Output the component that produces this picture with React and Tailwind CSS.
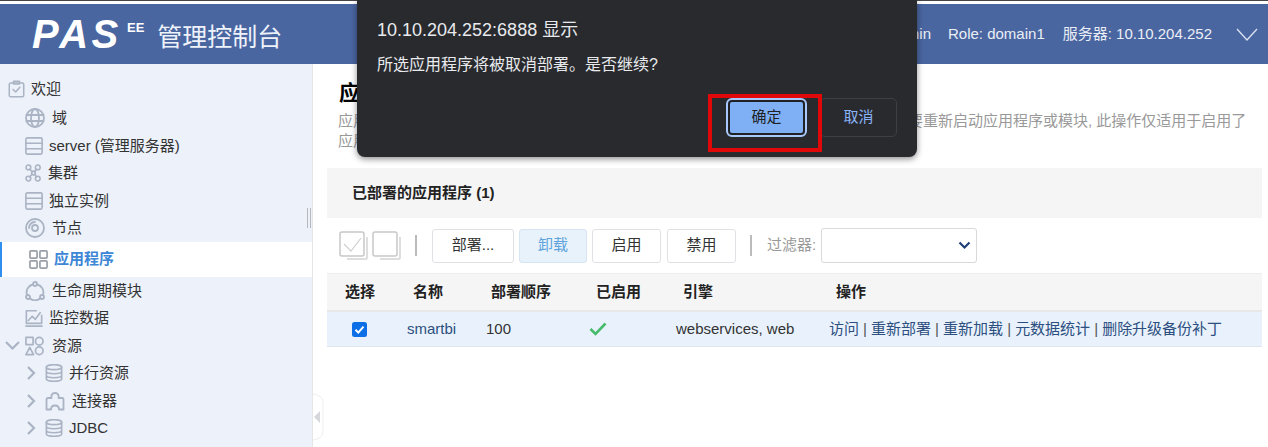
const C = "#aab4c4";
const Ic = ({ w = 20, h = 20, children, color = C, sw = 1.8 }) => (
  <svg width={w} height={h} viewBox="0 0 20 20" fill="none" stroke={color} strokeWidth={sw} strokeLinecap="round" strokeLinejoin="round" className="shrink-0">{children}</svg>
);
const Clip = () => <Ic w={17} h={18}><rect x="1.5" y="3" width="17" height="16" rx="1.5" /><rect x="6.5" y="1" width="7" height="3" /><path d="M6 10.5l3 3 5-5.5" /></Ic>;
const Globe = () => <Ic><circle cx="10" cy="10" r="9" /><ellipse cx="10" cy="10" rx="4" ry="9" /><path d="M1.5 7h17M1.5 13h17" /></Ic>;
const Server = () => <Ic w={18} h={18}><rect x="1" y="1" width="18" height="18" rx="1.5" /><path d="M1 7h18M1 13h18" /></Ic>;
const Cluster = () => <Ic w={17} h={20}><circle cx="4" cy="3.5" r="2.8" /><circle cx="15" cy="3.5" r="2.8" /><circle cx="10" cy="10" r="2.2" /><circle cx="4" cy="16.5" r="2.8" /><circle cx="15" cy="16.5" r="2.8" /><path d="M5.5 5.5l3 3M13.5 5.5l-2.5 3M8.5 11.5l-3 3M11.5 11.5l2 3" /></Ic>;
const Disc = () => <Ic><circle cx="10" cy="10" r="9" /><circle cx="10" cy="10" r="3" /><path d="M10 4a6 6 0 0 0-6 6" /></Ic>;
const Grid = () => <Ic w={19} h={19} color="#9aa0a8"><rect x="1" y="1" width="7.5" height="7.5" rx="1" /><rect x="11.5" y="1" width="7.5" height="7.5" rx="1" /><rect x="1" y="11.5" width="7.5" height="7.5" rx="1" /><rect x="11.5" y="11.5" width="7.5" height="7.5" rx="1" /></Ic>;
const Life = () => <Ic><circle cx="10" cy="3" r="2" /><circle cx="3" cy="16" r="2" /><circle cx="17" cy="16" r="2" /><path d="M7.8 3.5A8 8 0 0 0 2 13.8M12.2 3.5A8 8 0 0 1 18 13.8M5 17.5a8 8 0 0 0 10 0" /></Ic>;
const Chart = () => <Ic w={18} h={18}><path d="M18.5 7v9H1.5V2h11" /><path d="M1 19h18" /><path d="M3.5 13l4.5-5 3.5 3.5L17 4" /></Ic>;
const Res = () => <Ic w={19} h={20}><rect x="1" y="1" width="7.5" height="7.5" /><circle cx="15" cy="5" r="4" /><path d="M5 11.5l4 7.5H1z" /><circle cx="15" cy="15" r="4" /></Ic>;
const Db = () => <Ic w={18} h={18}><ellipse cx="10" cy="3.5" rx="8.5" ry="2.8" /><path d="M1.5 3.5v13c0 1.6 3.8 2.8 8.500 2.800s8.500-1.200 8.500-2.800v-13M1.500 8c0 1.600 3.800 2.800 8.500 2.800s8.500-1.200 8.500-2.800M1.500 12.500c0 1.600 3.800 2.800 8.500 2.800s8.500-1.200 8.500-2.800" /></Ic>;
const Conn = () => <Ic><path d="M1.500 8.500c0-1 .6-1.500 1.500-1.500h3.500C6 5 6.500 2 10 2s4 3 3.500 5H17c1 0 1.500.5 1.500 1.500V18.500h-4.500c0-3-1.500-4-4-4s-4 1-4 4H1.500z" /></Ic>;
const Down = ({ className = "" }) => <svg width="15" height="9" viewBox="0 0 15 9" fill="none" stroke="#aab4c4" strokeWidth="2.200" className={className}><path d="M1 1l6.500 6.500L14 1" /></svg>;
const Right = () => <svg width="9" height="14" viewBox="0 0 9 14" fill="none" stroke="#aab4c4" strokeWidth="2.200" className="shrink-0"><path d="M1 1l6 6-6 6" /></svg>;

const Row = ({ pl, icon, gap, text, lead }) => (
  <div className={`flex items-center h-[27.5px] ${pl} ${gap}`}>
    {lead}
    {icon}
    <span className="text-[#333] text-[15px] whitespace-nowrap">{text}</span>
  </div>
);

const Btn = ({ children, className = "" }) => (
  <div className={`h-[34px] flex items-center justify-center rounded-[3px] border border-[#dfe1e5] text-[15px] text-[#333] bg-white ${className}`}>{children}</div>
);

const ToolCheck = ({ check }) => (
  <svg width="30" height="30" viewBox="0 0 30 30" fill="none" className="shrink-0">
    <rect x="1" y="1" width="24" height="24" rx="2" stroke="#c8c8c8" strokeWidth="1.500" />
    <path d="M28 6v21a1 1 0 0 1-1 1H8" stroke="#d4d4d4" strokeWidth="1.500" />
    {check && <path d="M5 13l7 7 10-13" stroke="#d0d0d0" strokeWidth="1.200" />}
  </svg>
);

const cols = ["w-[73px]", "w-[80px]", "w-[105px]", "w-[85px]", "w-[155px]", "flex-1"];

export default function App() {
  return (
    <div className="relative w-[1268px] h-[447px] overflow-hidden bg-white font-['Liberation_Sans','Noto_Sans_CJK_SC',sans-serif] flex flex-col">
      <div className="h-1 shrink-0 border-t border-[#444] bg-white" />
      <header className="h-[60px] shrink-0 bg-[#4a66a1] flex items-center text-white pl-[32px] pr-[10px]">
        <span className="text-[40px] font-bold italic leading-none tracking-[3.5px] w-[88px] inline-block -mt-[1px] whitespace-nowrap">PAS</span>
        <span className="text-[13px] font-bold leading-none ml-[7px] -mt-[14px]">EE</span>
        <span className="text-[25px] leading-none ml-[13px] mt-[6px] text-[#eef3fb]">管理控制台</span>
        <div className="ml-auto flex items-center text-[15px] text-[#eaeef6]">
          <span>用户: admin</span>
          <span className="ml-[17px]">Role: domain1</span>
          <span className="ml-[18px]">服务器: 10.10.204.252</span>
          <svg width="22" height="13" viewBox="0 0 22 13" fill="none" stroke="#dbe2f0" strokeWidth="1.300" className="ml-[24px]"><path d="M1 1l10 11L21 1" /></svg>
        </div>
      </header>
      <div className="flex-1 flex min-h-0">
        <aside className="w-[313px] shrink-0 bg-[#edf1f9] pt-[11px] border-r border-[#e6e6e6] overflow-hidden">
          <div className="mb-[2px]"><Row pl="pl-[8px]" gap="gap-[6px]" icon={<Clip />} text="欢迎" /></div>
          <Row pl="pl-[25px]" gap="gap-[7px]" icon={<Globe />} text="域" />
          <Row pl="pl-[25px]" gap="gap-[6px]" icon={<Server />} text="server (管理服务器)" />
          <Row pl="pl-[25px]" gap="gap-[6px]" icon={<Cluster />} text="集群" />
          <Row pl="pl-[25px]" gap="gap-[6px]" icon={<Server />} text="独立实例" />
          <Row pl="pl-[25px]" gap="gap-[7px]" icon={<Disc />} text="节点" />
          <div className="h-[35px] bg-white border-l-2 border-[#2f8fef] flex items-center pl-[27px] gap-[6px]">
            <Grid />
            <span className="text-[15px] font-bold text-[#3d87d6]">应用程序</span>
          </div>
          <Row pl="pl-[25px]" gap="gap-[7px]" icon={<Life />} text="生命周期模块" />
          <Row pl="pl-[25px]" gap="gap-[6px]" icon={<Chart />} text="监控数据" />
          <Row pl="pl-[5px]" gap="gap-[5px]" lead={<Down />} icon={<Res />} text={<span className="ml-[3px]">资源</span>} />
          <Row pl="pl-[27px]" gap="gap-[9px]" lead={<Right />} icon={<Db />} text={<span className="-ml-[3px]">并行资源</span>} />
          <Row pl="pl-[27px]" gap="gap-[9px]" lead={<Right />} icon={<Conn />} text={<span className="-ml-[2px]">连接器</span>} />
          <Row pl="pl-[27px]" gap="gap-[9px]" lead={<Right />} icon={<Db />} text={<span className="-ml-[3px]">JDBC</span>} />
        </aside>
        <main className="flex-1 min-w-0 pl-[14px] pr-[6px]">
          <div className="pl-[12px] h-[104px]">
            <h1 className="text-[21px] font-bold text-black leading-none pt-[18px]">应用程序</h1>
            <p className="mt-[8px] text-[15px] leading-[20px] text-[#999] w-[912px] -ml-[1px]">应用程序是部署到服务器上的企业应用程序或者模块在此页面可管理也可在线更新不需要重新启动应用程序或模块, 此操作仅适用于启用了应用程序的目标实例。</p>
          </div>
          <div className="h-[50px] bg-[#f5f5f5] flex items-center pl-[25px] text-[15px] font-bold text-[#222]">已部署的应用程序 (1)</div>
          <div className="h-[55px] flex items-center pl-[12px]">
            <ToolCheck check />
            <span className="ml-[3px]"><ToolCheck /></span>
            <span className="w-[2px] h-[21px] bg-[#bbb] ml-[13px]" />
            <Btn className="w-[82px] ml-[15px]">部署...</Btn>
            <Btn className="w-[68px] ml-[5px] !bg-[#e8f2fb] !border-[#d7e5f2] !text-[#5ea3dc]">卸载</Btn>
            <Btn className="w-[69px] ml-[5px]">启用</Btn>
            <Btn className="w-[69px] ml-[6px]">禁用</Btn>
            <span className="w-[2px] h-[21px] bg-[#bbb] ml-[14px]" />
            <span className="ml-[15px] text-[15px] text-[#999]">过滤器:</span>
            <div className="ml-[5px] w-[156px] h-[35px] rounded-[3px] border border-[#d9d9d9] flex items-center justify-end pr-[5px]">
              <svg width="13" height="9" viewBox="0 0 13 9" fill="none" stroke="#1f3f77" strokeWidth="2.200"><path d="M1.500 1.500l5 5 5-5" /></svg>
            </div>
          </div>
          <div className="h-[39px] bg-[#f5f5f5] border-b-2 border-[#e8e8e8] border-t border-t-[#eee] flex items-center text-[15px] font-bold text-[#222]">
            <div className={`${cols[0]} pl-[18px]`}>选择</div>
            <div className={`${cols[1]} pl-[13px]`}>名称</div>
            <div className={`${cols[2]} pl-[11px]`}>部署顺序</div>
            <div className={`${cols[3]} pl-[11px]`}>已启用</div>
            <div className={`${cols[4]} pl-[13px]`}>引擎</div>
            <div className={`${cols[5]} pl-[11px]`}>操作</div>
          </div>
          <div className="h-[35px] bg-[#e9f2fc] border-b border-[#dfe5ec] flex items-center text-[15px] text-[#333]">
            <div className={`${cols[0]} pl-[25px]`}>
              <svg width="15" height="15" viewBox="0 0 15 15"><rect width="15" height="15" rx="2.500" fill="#0d6fe6" /><path d="M3.500 7.800l2.800 2.800 5.200-6" fill="none" stroke="#fff" strokeWidth="2" /></svg>
            </div>
            <div className={`${cols[1]} pl-[7px] text-[#2c4f80]`}>smartbi</div>
            <div className={`${cols[2]} pl-[6px]`}>100</div>
            <div className={`${cols[3]} pl-[4px]`}>
              <svg width="18" height="14" viewBox="0 0 18 14" fill="none" stroke="#46bb6c" strokeWidth="2.600"><path d="M1.500 7l5 5 10-10.500" /></svg>
            </div>
            <div className={`${cols[4]} pl-[6px]`}>webservices, web</div>
            <div className={`${cols[5]} pl-[4px] text-[#2c4f80] whitespace-nowrap tracking-[-0.03px]`}>访问 <span className="text-[#555]">|</span> 重新部署 <span className="text-[#555]">|</span> 重新加载 <span className="text-[#555]">|</span> 元数据统计 <span className="text-[#555]">|</span> 删除升级备份补丁</div>
          </div>
        </main>
      </div>

      {/* sidebar scroll grip */}
      <div className="absolute left-[307px] top-[208px] w-[4px] h-[20px] border-x border-[#b5b8bd]" />
      {/* collapse handle */}
      <svg className="absolute left-[313px] top-[393px]" width="11" height="48" viewBox="0 0 11 48" fill="#fff" stroke="#eceef2"><path d="M0 1c6 1 10 4 10 8v30c0 4-4 7-10 8" /><path d="M1 24l6-6v12z" fill="#d5d7db" stroke="none" /></svg>

      {/* browser confirm dialog */}
      <div className="absolute left-[357px] top-0 w-[560px] h-[157px] bg-[#292a2d] rounded-b-[8px] shadow-[0_2px_6px_rgba(0,0,0,0.45)] pl-[20px] pr-[20px] flex flex-col">
        <div className="text-[18px] leading-[22px] text-[#e8eaed] mt-[19px]">10.10.204.252:6888 显示</div>
        <div className="text-[16px] leading-[20px] text-[#e8eaed] mt-[14px]">所选应用程序将被取消部署。是否继续?</div>
        <div className="flex justify-end items-center gap-[15px] mt-[23px] h-[39px]">
          <div className="w-[77px] h-[35px] rounded-[4px] bg-[#7fb0f5] border-2 border-[#202124] outline-2 outline-[#a8c7fa] flex items-center justify-center text-[15px] text-[#202124]">确定</div>
          <div className="w-[77px] h-[39px] rounded-[5px] border border-[#3c4043] flex items-center justify-center text-[15px] text-[#8ab4f8]">取消</div>
        </div>
      </div>
      {/* red annotation */}
      <div className="absolute left-[708px] top-[94px] w-[114px] h-[58px] border-[4px] border-[#e00808]" />
    </div>
  );
}
